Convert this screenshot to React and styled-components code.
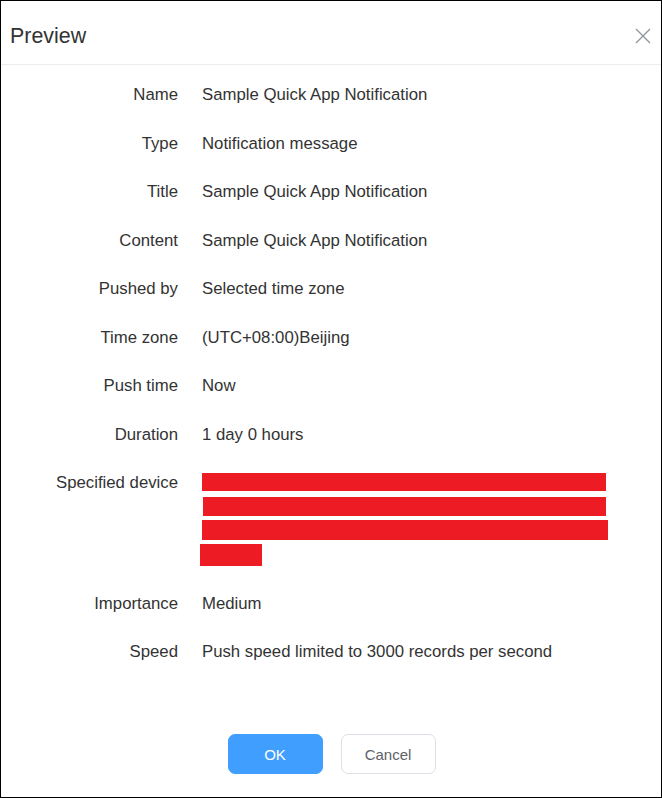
import React from "react";
import styled, { createGlobalStyle } from "styled-components";

const Global = createGlobalStyle`
  html, body { margin: 0; padding: 0; background: #fff; }
  body { font-family: "Liberation Sans", Arial, sans-serif; }
  * { box-sizing: border-box; }
`;

const Dialog = styled.div`
  width: 662px;
  height: 798px;
  border: 1px solid #000;
  background: #fff;
  display: flex;
  flex-direction: column;
`;

const Header = styled.div`
  height: 64px;
  display: flex;
  align-items: center;
  justify-content: space-between;
  padding: 7px 9px 0 9px;
  border-bottom: 1px solid #ececec;
`;

const Title = styled.div`
  font-size: 21.4px;
  color: #333;
`;

const Close = styled.button`
  border: none;
  background: none;
  padding: 0;
  width: 18px;
  height: 18px;
  display: flex;
  align-items: center;
  justify-content: center;
  cursor: pointer;
`;

const Body = styled.div`
  padding-top: 18px;
  display: flex;
  flex-direction: column;
  gap: 24.5px;
`;

const Row = styled.div`
  display: grid;
  grid-template-columns: 177px 1fr;
  column-gap: 24px;
  font-size: 16.75px;
  line-height: 24px;
  color: #333;
`;

const Label = styled.div`
  text-align: right;
`;

const Value = styled.div`
  display: flex;
  flex-direction: column;
`;

const Redact = styled.div`
  height: ${(p) => p.h}px;
  width: ${(p) => p.w}px;
  margin: ${(p) => p.m};
  background: #ed1c24;
`;

const Footer = styled.div`
  margin-top: auto;
  padding-bottom: 23px;
  display: flex;
  justify-content: center;
  gap: 18px;
  padding-left: 1px;
`;

const Button = styled.button`
  width: 95px;
  height: 40px;
  border-radius: 7px;
  font-family: "Liberation Sans", Arial, sans-serif;
  font-size: 15px;
  cursor: pointer;
  border: 1px solid ${(p) => (p.primary ? "#409eff" : "#dcdfe6")};
  background: ${(p) => (p.primary ? "#409eff" : "#fff")};
  color: ${(p) => (p.primary ? "#fff" : "#606266")};
`;

const rows = [
  ["Name", "Sample Quick App Notification"],
  ["Type", "Notification message"],
  ["Title", "Sample Quick App Notification"],
  ["Content", "Sample Quick App Notification"],
  ["Pushed by", "Selected time zone"],
  ["Time zone", "(UTC+08:00)Beijing"],
  ["Push time", "Now"],
  ["Duration", "1 day 0 hours"],
];

export default function App() {
  return (
    <>
      <Global />
      <Dialog>
        <Header>
          <Title>Preview</Title>
          <Close aria-label="Close">
            <svg width="16" height="16" viewBox="0 0 16 16">
              <path d="M1 1L15 15M15 1L1 15" stroke="#909399" strokeWidth="1.3" fill="none" />
            </svg>
          </Close>
        </Header>
        <Body>
          {rows.map(([l, v]) => (
            <Row key={l}>
              <Label>{l}</Label>
              <Value>{v}</Value>
            </Row>
          ))}
          <Row>
            <Label>Specified device</Label>
            <Value>
              <Redact w={404} h={18} m="2px 0 4px 0" />
              <Redact w={403} h={19} m="2px 0 3px 1px" />
              <Redact w={406} h={20} m="1px 0 3px 0" />
              <Redact w={62} h={22} m="1px 0 1px -2px" />
            </Value>
          </Row>
          <Row>
            <Label>Importance</Label>
            <Value>Medium</Value>
          </Row>
          <Row>
            <Label>Speed</Label>
            <Value>Push speed limited to 3000 records per second</Value>
          </Row>
        </Body>
        <Footer>
          <Button primary>OK</Button>
          <Button>Cancel</Button>
        </Footer>
      </Dialog>
    </>
  );
}
